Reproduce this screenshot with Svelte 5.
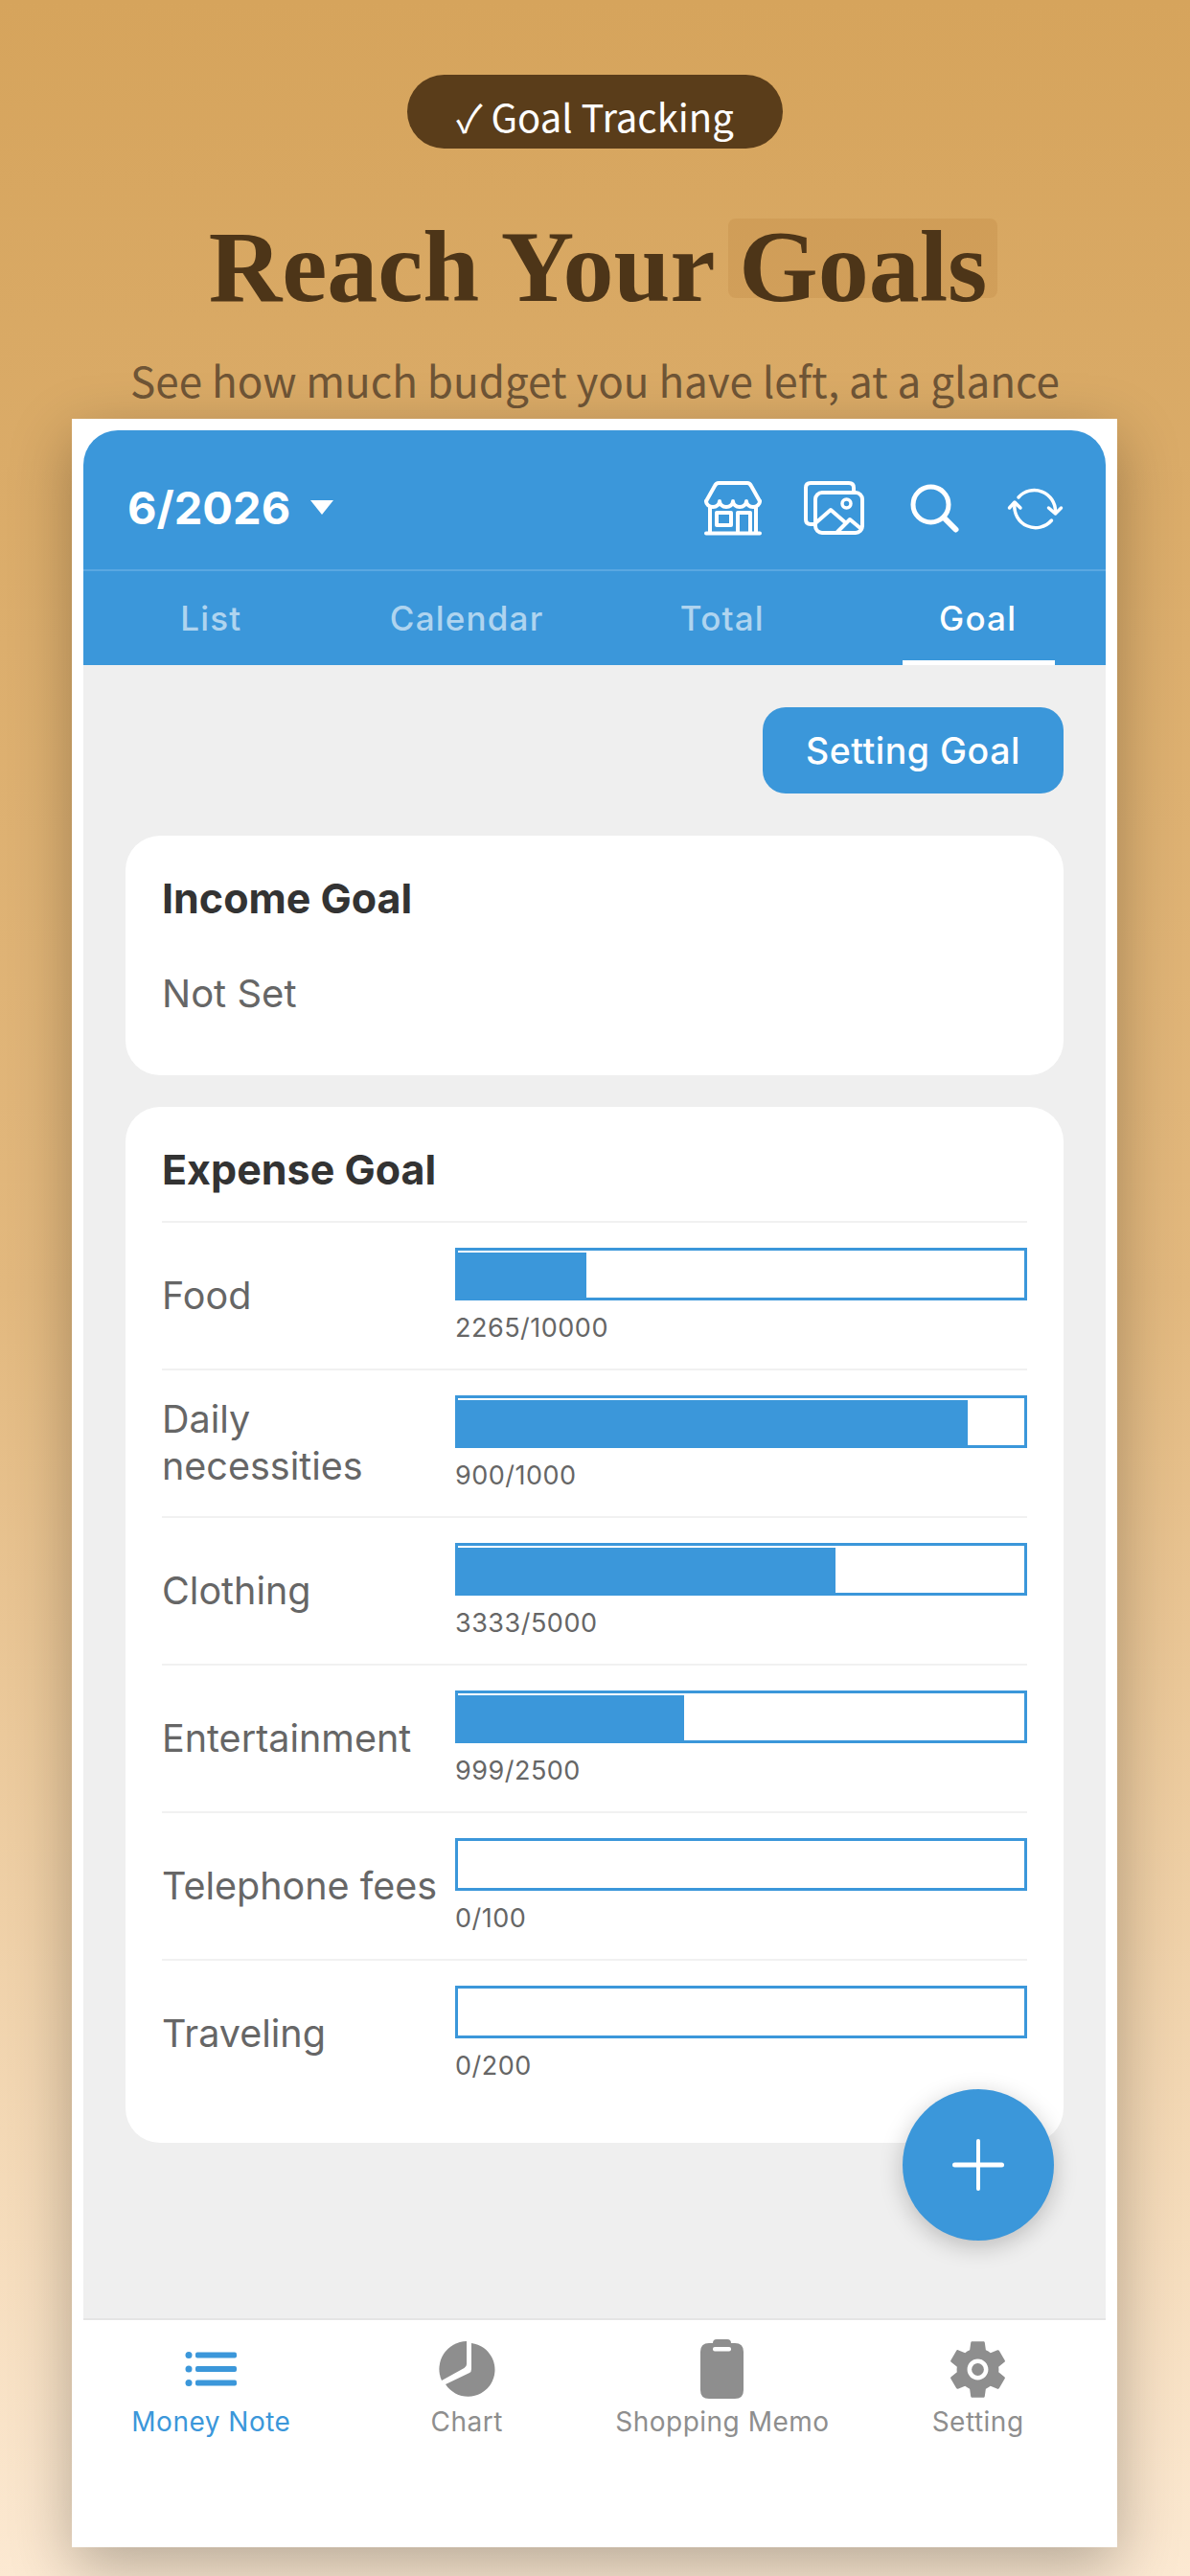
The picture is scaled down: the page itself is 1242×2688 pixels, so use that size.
<script lang="ts">
	const tabs = ['List', 'Calendar', 'Total', 'Goal'];

	const goals = [
		{ name: 'Food', used: 2265, total: 10000 },
		{ name: 'Daily necessities', used: 900, total: 1000 },
		{ name: 'Clothing', used: 3333, total: 5000 },
		{ name: 'Entertainment', used: 999, total: 2500 },
		{ name: 'Telephone fees', used: 0, total: 100 },
		{ name: 'Traveling', used: 0, total: 200 }
	];
</script>

<div class="page">
	<div class="badge">✓ Goal Tracking</div>
	<h1 class="title">Reach Your <span class="mark">Goals</span></h1>
	<p class="subtitle">See how much budget you have left, at a glance</p>

	<div class="phone">
		<div class="app">
			<header class="header">
				<div class="month">
					<span>6/2026</span>
					<i class="caret"></i>
				</div>
				<div class="actions">
					<svg class="hicon" viewBox="0 0 60 60" fill="none" stroke="#fff" stroke-width="4" stroke-linecap="round" stroke-linejoin="round">
						<path d="M2 23 L11 7 Q12.500 4 15 4 H45 Q47.500 4 49 7 L58 23" />
						<path d="M2 23 a7 6 0 0 0 14 0 a7 6 0 0 0 14 0 a7 6 0 0 0 14 0 a7 6 0 0 0 14 0" />
						<path d="M6 29 V56 M54 29 V56 M2 56.500 H58" />
						<rect x="13" y="35" width="15" height="13" />
						<path d="M35 56 V35 H48 V56" />
					</svg>
					<svg class="hicon" viewBox="0 0 60 60" fill="none" stroke="#fff" stroke-width="4" stroke-linecap="round" stroke-linejoin="round">
						<path d="M9 47 H6 Q1 47 1 42 V9 Q1 4 6 4 H46 Q51 4 51 9 V13" />
						<rect x="11" y="14" width="49" height="42" rx="7" />
						<circle cx="43.500" cy="25.500" r="4.500" stroke-width="3.500" />
						<path d="M11 46 L27 32 L42 45 M34 55 L47 42 L59 52" />
					</svg>
					<svg class="hicon" viewBox="0 0 60 60" fill="none" stroke="#fff" stroke-linecap="round">
						<circle cx="26.500" cy="26.500" r="18.500" stroke-width="5" />
						<path d="M41 41 L52.500 52.500" stroke-width="6" />
					</svg>
					<svg class="hicon" viewBox="0 0 60 60" fill="none" stroke="#fff" stroke-width="3.500" stroke-linecap="round" stroke-linejoin="round">
						<path d="M13 19 A22 22 0 0 1 51.500 34" />
						<path d="M44.500 30 L51.500 36 L57.500 30" />
						<path d="M47.500 43 A22 22 0 0 1 9 26" />
						<path d="M3.500 30 L9 24 L15 30" />
					</svg>
				</div>
			</header>

			<nav class="tabs">
				{#each tabs as tab}
					<div class="tab" class:active={tab === 'Goal'}>{tab}</div>
				{/each}
			</nav>

			<main class="content">
				<div class="toolbar">
					<button class="setting">Setting Goal</button>
				</div>

				<section class="card income">
					<h2>Income Goal</h2>
					<p class="notset">Not Set</p>
				</section>

				<section class="card expense">
					<h2 class="expense-title">Expense Goal</h2>
					{#each goals as goal}
						<div class="row">
							<div class="label">{goal.name}</div>
							<div class="meter">
								<div class="bar">
									<div class="fill" style="width: {(goal.used / goal.total) * 100}%"></div>
								</div>
								<div class="amount">{goal.used}/{goal.total}</div>
							</div>
						</div>
					{/each}
				</section>

				<button class="fab" aria-label="Add">
					<svg viewBox="0 0 54 54" width="54" height="54" fill="#fff">
						<rect x="0" y="24.500" width="54" height="5" rx="2.500" />
						<rect x="25" y="0" width="4" height="54" rx="2" />
					</svg>
				</button>
			</main>

			<footer class="bottom">
				<div class="item on">
					<div class="ficon">
						<svg viewBox="0 0 54 36" width="54" height="36" fill="#3b97da">
							<circle cx="4" cy="3.500" r="3.500" />
							<circle cx="4" cy="18" r="3.500" />
							<circle cx="4" cy="32.500" r="3.500" />
							<rect x="11" y="0.500" width="43" height="6" rx="2" />
							<rect x="11" y="15" width="43" height="6" rx="2" />
							<rect x="11" y="29.500" width="43" height="6" rx="2" />
						</svg>
					</div>
					<span>Money Note</span>
				</div>
				<div class="item">
					<div class="ficon">
						<svg viewBox="0 0 60 60" width="60" height="60" fill="#8e8e8e">
							<path d="M30 1 A29 29 0 0 0 4 42 L27.500 29 Q30 27.500 30 25 Z" />
							<path d="M35 3 A28 28 0 1 1 8 46 L33 34 Q35 33 35 30 Z" />
						</svg>
					</div>
					<span>Chart</span>
				</div>
				<div class="item">
					<div class="ficon">
						<svg viewBox="0 0 45 62" width="45" height="62">
							<path fill="#8e8e8e" d="M13 4 Q13 0 17 0 H28 Q32 0 32 4 H36 Q45 4 45 13 V53 Q45 62 36 62 H9 Q0 62 0 53 V13 Q0 4 9 4 Z" />
							<rect x="13" y="8" width="19" height="4.500" rx="2" fill="#fff" />
						</svg>
					</div>
					<span>Shopping Memo</span>
				</div>
				<div class="item">
					<div class="ficon">
						<svg viewBox="0 0 24 24" width="73" height="73" fill="#8e8e8e">
							<path d="M19.14 12.94c.04-.3.06-.61.06-.94 0-.32-.02-.64-.07-.94l2.03-1.58c.18-.14.23-.41.12-.61l-1.92-3.32c-.12-.22-.37-.29-.59-.22l-2.39.96c-.5-.38-1.03-.7-1.62-.94l-.36-2.54c-.04-.24-.24-.41-.48-.41h-3.84c-.24 0-.43.17-.47.41l-.36 2.54c-.59.24-1.13.57-1.62.94l-2.39-.96c-.22-.08-.47 0-.59.22L2.74 8.87c-.12.21-.08.47.12.61l2.03 1.58c-.05.3-.09.63-.09.94s.02.64.07.94l-2.03 1.58c-.18.14-.23.41-.12.61l1.92 3.32c.12.22.37.29.59.22l2.39-.96c.5.38 1.03.7 1.62.94l.36 2.54c.05.24.24.41.48.41h3.84c.24 0 .44-.17.47-.41l.36-2.54c.59-.24 1.13-.56 1.62-.94l2.39.96c.22.08.47 0 .59-.22l1.92-3.32c.12-.22.07-.47-.12-.61l-2.01-1.58zM12 15.6c-1.98 0-3.6-1.62-3.6-3.6s1.62-3.6 3.6-3.6 3.6 1.62 3.6 3.6-1.62 3.6-3.6 3.6z" />
							<circle cx="12" cy="12" r="2.100" />
						</svg>
					</div>
					<span>Setting</span>
				</div>
			</footer>
		</div>
	</div>
</div>

<style>
	:global(body) {
		margin: 0;
	}

	.page {
		width: 1242px;
		height: 2688px;
		box-sizing: border-box;
		overflow: hidden;
		padding-top: 78px;
		display: flex;
		flex-direction: column;
		align-items: center;
		background: linear-gradient(180deg, #d6a45c 0%, #e2b87e 50%, #fce9d2 100%);
		font-family: Inter, 'Liberation Sans', sans-serif;
	}

	.badge {
		width: 392px;
		height: 77px;
		box-sizing: border-box;
		padding-top: 7px;
		border-radius: 39px;
		background: #5a3d1a;
		color: #fff;
		font-family: 'Noto Sans CJK SC', sans-serif;
		font-size: 40px;
		line-height: 72px;
		text-align: center;
	}

	.title {
		margin: 64px 0 0;
		padding-left: 6px;
		font-family: 'Liberation Serif', serif;
		font-weight: 700;
		font-size: 106px;
		line-height: 120px;
		color: #4d3518;
		white-space: nowrap;
		isolation: isolate;
	}

	.mark {
		position: relative;
		display: inline-block;
	}

	.mark::before {
		content: '';
		position: absolute;
		z-index: -1;
		left: -11px;
		right: -11px;
		top: 9px;
		height: 83px;
		border-radius: 8px;
		background: rgba(180, 120, 50, 0.2);
	}

	.subtitle {
		margin: 24px 0 0;
		font-family: 'Noto Sans CJK SC', sans-serif;
		font-weight: 400;
		font-size: 44px;
		line-height: 66px;
		color: #6f5536;
		white-space: nowrap;
	}

	.phone {
		position: absolute;
		top: 437px;
		left: 75px;
		width: 1091px;
		height: 2221px;
		box-sizing: border-box;
		padding: 12px 12px 0;
		background: #fff;
		box-shadow: 0 20px 60px rgba(0, 0, 0, 0.28);
	}

	.app {
		height: 100%;
		display: flex;
		flex-direction: column;
		border-radius: 36px 36px 0 0;
		overflow: hidden;
		background: #fff;
	}

	.header {
		height: 147px;
		flex: none;
		box-sizing: border-box;
		padding: 16px 44px 0 46px;
		display: flex;
		align-items: center;
		justify-content: space-between;
		background: #3b97da;
		border-bottom: 2px solid #5aa8e1;
	}

	.month {
		display: flex;
		align-items: center;
		gap: 21px;
		color: #fff;
		font-size: 47px;
		font-weight: 700;
	}

	.caret {
		width: 0;
		height: 0;
		border-left: 12px solid transparent;
		border-right: 12px solid transparent;
		border-top: 15px solid #fff;
	}

	.actions {
		display: flex;
		gap: 45px;
	}

	.hicon {
		width: 60px;
		height: 60px;
		overflow: visible;
	}

	.tabs {
		height: 98px;
		flex: none;
		display: grid;
		grid-template-columns: repeat(4, 1fr);
		background: #3b97da;
	}

	.tab {
		position: relative;
		display: flex;
		align-items: center;
		justify-content: center;
		color: rgba(255, 255, 255, 0.6);
		font-size: 35px;
		font-weight: 500;
		letter-spacing: 1.2px;
	}

	.tab.active {
		color: #fff;
	}

	.tab.active::after {
		content: '';
		position: absolute;
		left: 55px;
		right: 53px;
		bottom: 0;
		height: 5px;
		background: #fff;
	}

	.content {
		position: relative;
		flex: 1;
		box-sizing: border-box;
		padding: 44px 44px 0;
		background: #efefef;
	}

	.toolbar {
		display: flex;
		justify-content: flex-end;
	}

	.setting {
		width: 314px;
		height: 90px;
		border: none;
		border-radius: 24px;
		background: #3b97da;
		color: #fff;
		font-family: inherit;
		font-size: 37.500px;
		font-weight: 500;
		letter-spacing: 0.5px;
	}

	.card {
		padding: 0 38px;
		border-radius: 36px;
		background: #fff;
	}

	.card h2 {
		margin: 0;
		color: #333;
		font-size: 43px;
		font-weight: 700;
		line-height: 50px;
	}

	.income {
		height: 250px;
		box-sizing: border-box;
		margin-top: 44px;
		padding-top: 40px;
	}

	.notset {
		margin: 52px 0 0;
		color: #666;
		font-size: 40px;
		line-height: 46px;
	}

	.expense {
		margin-top: 33px;
		padding-bottom: 38px;
	}

	.expense-title {
		padding: 40px 0 29px;
	}

	.row {
		height: 154px;
		box-sizing: border-box;
		display: flex;
		align-items: center;
		border-top: 2px solid #f1f1f1;
	}

	.label {
		width: 306px;
		flex: none;
		color: #666;
		font-size: 39.500px;
		line-height: 49px;
	}

	.meter {
		flex: 1;
	}

	.bar {
		height: 55px;
		box-sizing: border-box;
		border: 3px solid #3b97da;
		padding-top: 2px;
		background: #fff;
	}

	.fill {
		height: 50px;
		background: #3b97da;
	}

	.amount {
		margin-top: 13px;
		color: #666;
		font-size: 27px;
		line-height: 32px;
		letter-spacing: 0.5px;
	}

	.fab {
		position: absolute;
		right: 54px;
		bottom: 81px;
		width: 158px;
		height: 158px;
		border: none;
		border-radius: 50%;
		display: flex;
		align-items: center;
		justify-content: center;
		background: #3b97da;
		box-shadow: 0 6px 24px rgba(0, 0, 0, 0.22);
	}

	.bottom {
		height: 239px;
		flex: none;
		box-sizing: border-box;
		padding-top: 14px;
		display: grid;
		grid-template-columns: repeat(4, 1fr);
		align-items: start;
		border-top: 2px solid #e4e4e4;
		background: #fff;
	}

	.item {
		display: flex;
		flex-direction: column;
		align-items: center;
		color: #8e8e8e;
		font-size: 28px;
		font-weight: 400;
		letter-spacing: 0.5px;
	}

	.item.on {
		color: #3b97da;
	}

	.ficon {
		height: 74px;
		display: flex;
		align-items: center;
		justify-content: center;
	}

	.item span {
		line-height: 36px;
	}
</style>
